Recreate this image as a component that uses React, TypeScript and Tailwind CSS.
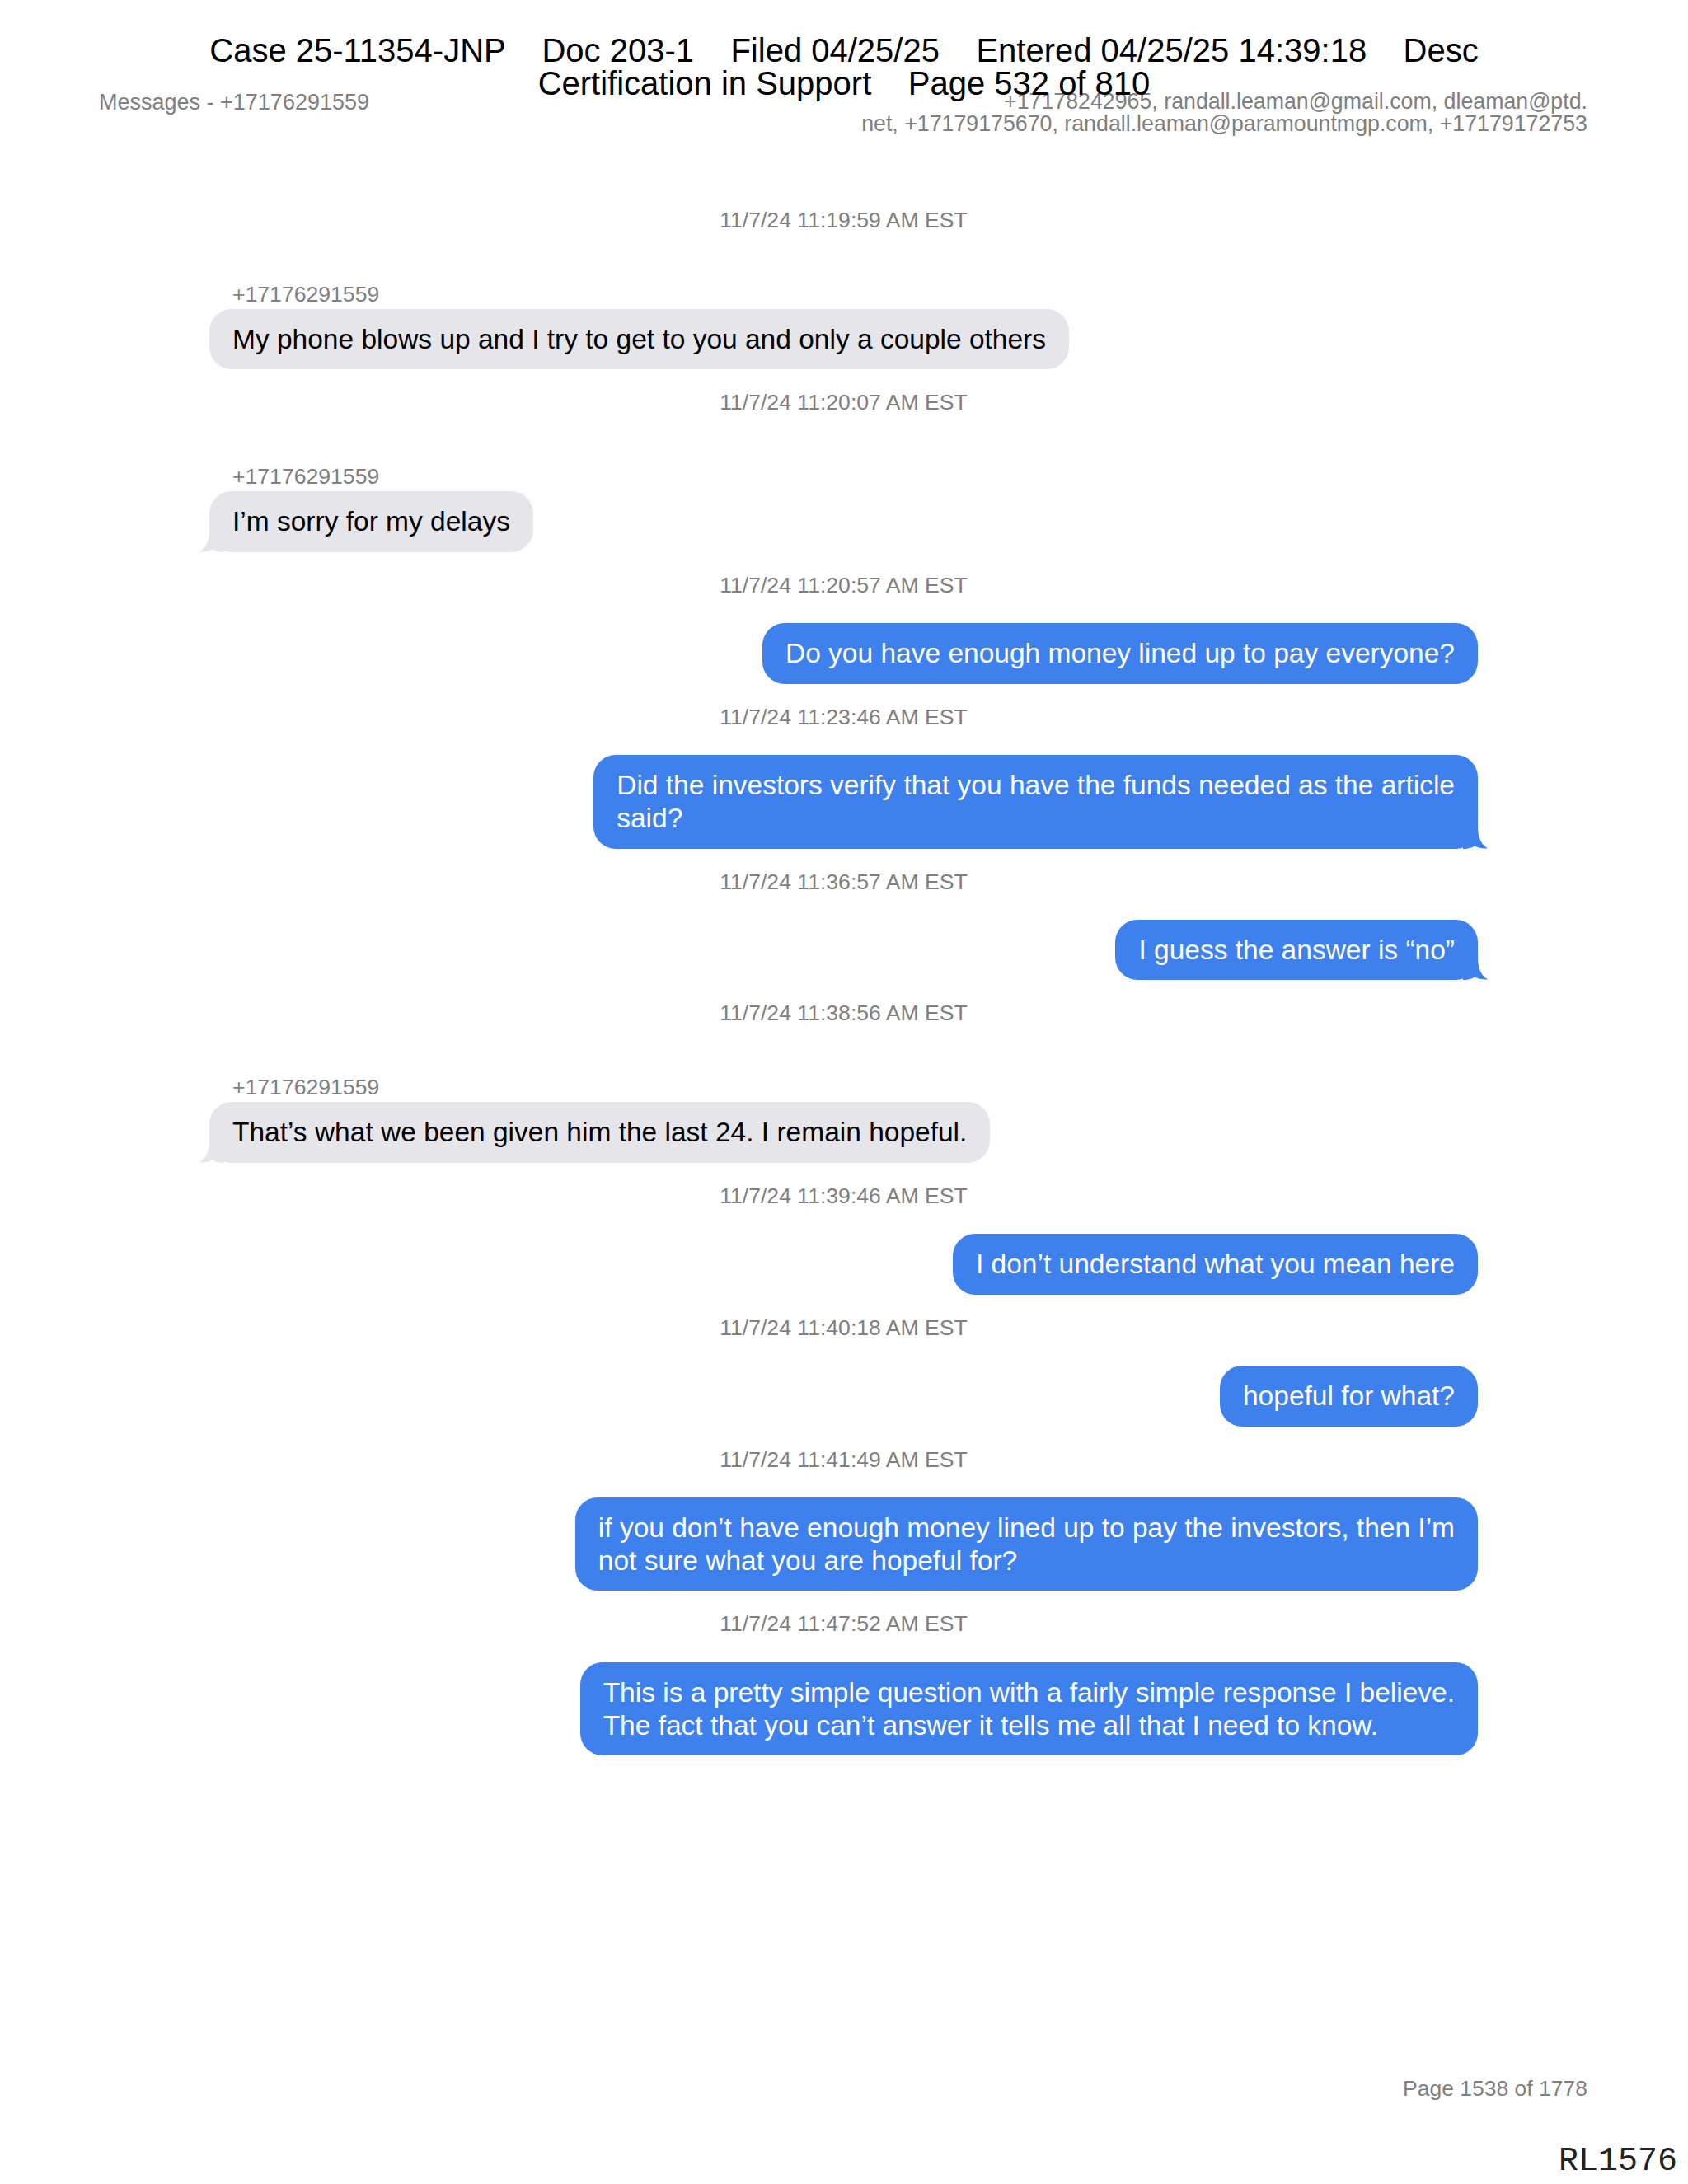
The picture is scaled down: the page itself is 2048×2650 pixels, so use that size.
import clsx from "clsx";

type Msg = {
  time: string;
  from?: string;
  mine?: boolean;
  lines: string[];
  tail?: boolean;
};

const messages: Msg[] = [
  { time: "11/7/24 11:19:59 AM EST", from: "+17176291559", lines: ["My phone blows up and I try to get to you and only a couple others"] },
  { time: "11/7/24 11:20:07 AM EST", from: "+17176291559", lines: ["I’m sorry for my delays"], tail: true },
  { time: "11/7/24 11:20:57 AM EST", mine: true, lines: ["Do you have enough money lined up to pay everyone?"] },
  {
    time: "11/7/24 11:23:46 AM EST",
    mine: true,
    lines: ["Did the investors verify that you have the funds needed as the article", "said?"],
    tail: true,
  },
  { time: "11/7/24 11:36:57 AM EST", mine: true, lines: ["I guess the answer is “no”"], tail: true },
  {
    time: "11/7/24 11:38:56 AM EST",
    from: "+17176291559",
    lines: ["That’s what we been given him the last 24. I remain hopeful."],
    tail: true,
  },
  { time: "11/7/24 11:39:46 AM EST", mine: true, lines: ["I don’t understand what you mean here"] },
  { time: "11/7/24 11:40:18 AM EST", mine: true, lines: ["hopeful for what?"] },
  {
    time: "11/7/24 11:41:49 AM EST",
    mine: true,
    lines: ["if you don’t have enough money lined up to pay the investors, then I’m", "not sure what you are hopeful for?"],
  },
  {
    time: "11/7/24 11:47:52 AM EST",
    mine: true,
    lines: [
      "This is a pretty simple question with a fairly simple response I believe.",
      "The fact that you can’t answer it tells me all that I need to know.",
    ],
  },
];

// bubble tail, drawn for the right side; mirrored for incoming
function Tail({ mine }: { mine?: boolean }) {
  return (
    <svg
      width="30"
      height="28"
      viewBox="0 0 30 28"
      className={clsx(
        "absolute bottom-0",
        mine ? "right-[-12px] fill-[#3f81ec]" : "left-[-12px] -scale-x-100 fill-[#e5e5ea]"
      )}
    >
      <path d="M0 0 H18 C18 13 21 22 30 27.5 C24 28 18 26.5 14 24.5 C11 27 6 28 0 28 Z" />
    </svg>
  );
}

function Bubble({ m }: { m: Msg }) {
  return (
    <div
      className={clsx(
        "relative whitespace-nowrap rounded-[27px] px-[28px] py-[16.7px] text-[33.5px] leading-[40px]",
        m.mine ? "bg-[#3f81ec] text-white" : "bg-[#e5e5ea] text-black"
      )}
    >
      {m.tail && <Tail mine={m.mine} />}
      <span className="relative">
        {m.lines.map((l, i) => (
          <div key={i}>{l}</div>
        ))}
      </span>
    </div>
  );
}

export default function App() {
  return (
    <div className="relative flex min-h-[2650px] w-full flex-col bg-white font-['Liberation_Sans',Arial,sans-serif]">
      {/* filing stamp over the page */}
      <div className="absolute left-0 right-0 top-[41px] whitespace-pre text-center text-[40px] leading-[40px] text-black">
        <div>{"Case 25-11354-JNP    Doc 203-1    Filed 04/25/25    Entered 04/25/25 14:39:18    Desc"}</div>
        <div>{"Certification in Support    Page 532 of 810"}</div>
      </div>

      {/* page header */}
      <div className="flex items-start justify-between pl-[120px] pr-[122px] pt-[110px] text-[#808080]">
        <div className="text-[27px] leading-[28px]">Messages - +17176291559</div>
        <div className="text-right text-[26.75px] leading-[27px]">
          <div>+17178242965, randall.leaman@gmail.com, dleaman@ptd.</div>
          <div>net, +17179175670, randall.leaman@paramountmgp.com, +17179172753</div>
        </div>
      </div>

      {/* conversation */}
      <div className="mt-[88px] flex flex-col pl-[254px] pr-[255px]">
        {messages.map((m, i) => (
          <div key={i} className={clsx("flex flex-col", i > 0 && "mt-[25px]")}>
            <div className="text-center text-[26.6px] leading-[30px] text-[#808080]">{m.time}</div>
            {m.from && (
              <div className="mt-[60px] pl-[28px] text-[26.6px] leading-[30px] text-[#808080]">{m.from}</div>
            )}
            <div className={clsx("flex", m.mine ? "justify-end" : "justify-start", m.from ? "mt-[3px]" : "mt-[31.5px]")}>
              <Bubble m={m} />
            </div>
          </div>
        ))}
      </div>

      {/* footer */}
      <div className="mt-auto flex flex-col pb-[7px]">
        <div className="pr-[122px] text-right text-[26.5px] leading-[28px] text-[#808080]">Page 1538 of 1778</div>
        <div className="mt-[55px] pr-[13px] text-right font-['Courier_New','Liberation_Mono',monospace] text-[40px] leading-[40px] text-[#222]">
          RL1576
        </div>
      </div>
    </div>
  );
}
